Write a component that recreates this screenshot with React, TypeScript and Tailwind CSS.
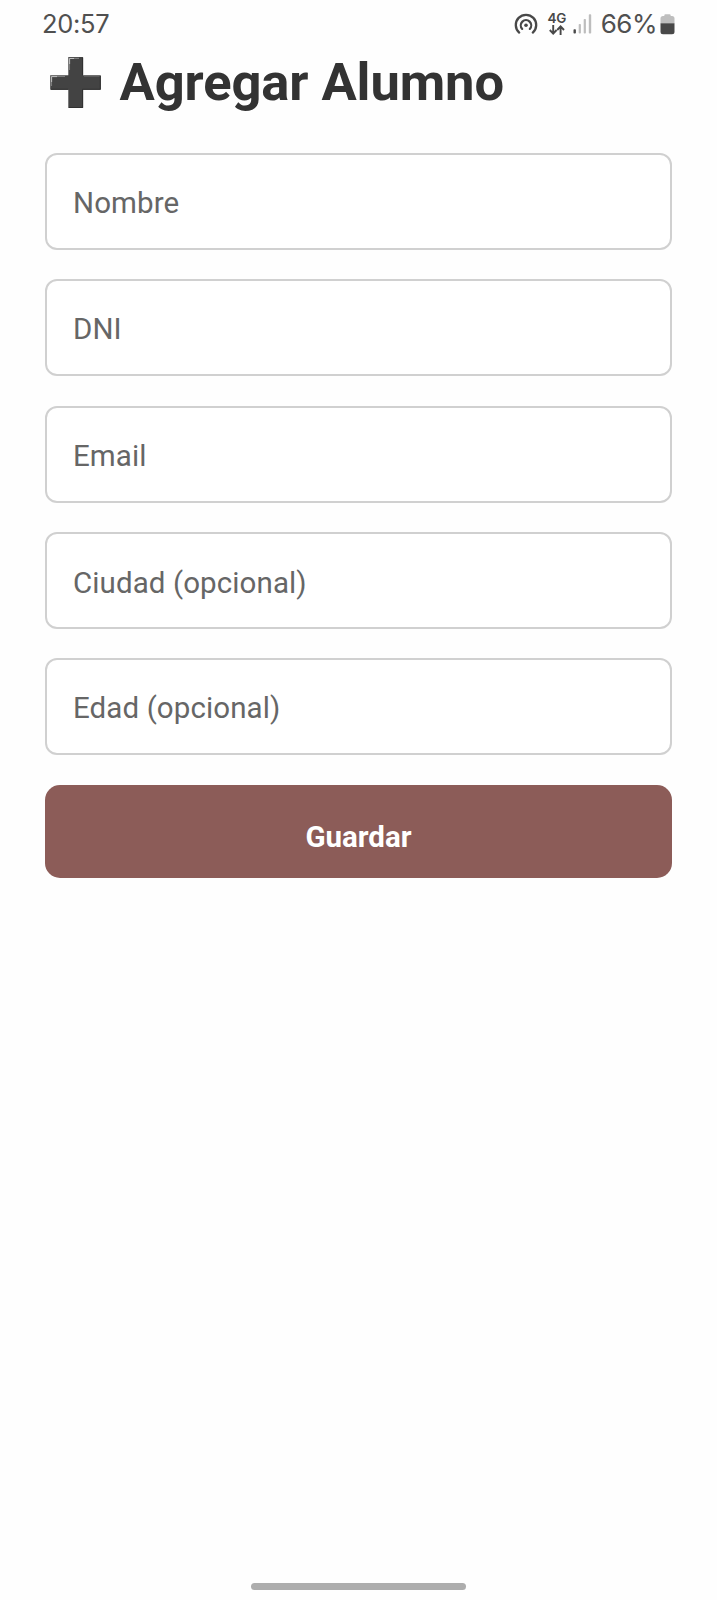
import React from "react";

const fields: { label: string; type: string; spacing: string }[] = [
  { label: "Nombre", type: "text", spacing: "pt-[3px] mb-[29px]" },
  { label: "DNI", type: "text", spacing: "pt-[3px] mb-[30px]" },
  { label: "Email", type: "email", spacing: "pt-[3px] mb-[29px]" },
  { label: "Ciudad (opcional)", type: "text", spacing: "pt-[5px] mb-[29px]" },
  { label: "Edad (opcional)", type: "text", spacing: "pt-[3px] mb-[30px]" },
];

function HotspotIcon() {
  return (
    <svg width="24" height="22" viewBox="0 0 24 22" fill="none" stroke="#484848" strokeLinecap="round">
      <path d="M5.2 19.6A10.2 10.2 0 1 1 18.8 19.6" strokeWidth="2.3" />
      <path d="M8.2 15.9A5.2 5.2 0 1 1 15.8 15.9" strokeWidth="2.2" />
      <circle cx="12" cy="12.2" r="1.8" fill="#484848" stroke="none" />
    </svg>
  );
}

function NetworkIcon() {
  return (
    <div className="flex w-[18px] flex-col items-center">
      <span className="text-[13.5px] leading-[11px] font-semibold tracking-[-0.4px] text-[#484848]">4G</span>
      <svg className="mt-px" width="16" height="10" viewBox="0 0 16 10" fill="none" stroke="#484848" strokeWidth="1.9">
        <path d="M4.2 0V8.5M0.8 5L4.2 8.6L7.6 5" />
        <path d="M11.6 10V1.5M8.2 5L11.6 1.4L15 5" />
      </svg>
    </div>
  );
}

function SignalIcon() {
  return (
    <svg width="19" height="20" viewBox="0 0 19 20">
      <rect x="0.5" y="15.3" width="2.4" height="4.2" rx="0.8" fill="#484848" />
      <rect x="5.7" y="10" width="2.2" height="9.5" rx="0.8" fill="#bdbdbd" />
      <rect x="10.7" y="5" width="2.2" height="14.5" rx="0.8" fill="#bdbdbd" />
      <rect x="15.8" y="0.3" width="2.4" height="19.2" rx="0.8" fill="#bdbdbd" />
    </svg>
  );
}

function BatteryIcon() {
  return (
    <svg width="15" height="21" viewBox="0 0 15 21">
      <path d="M4.3 2V1.5Q4.3 0.3 5.5 0.3H9.5Q10.7 0.3 10.7 1.5V2H12Q14.5 2 14.5 4.5V9.2H0.5V4.5Q0.5 2 3 2Z" fill="#bebebe" />
      <path d="M0.5 9.2H14.5V17.8Q14.5 20.3 12 20.3H3Q0.5 20.3 0.5 17.8Z" fill="#484848" />
    </svg>
  );
}

function PlusIcon() {
  return (
    <svg width="52" height="52" viewBox="0 0 52 52">
      <path d="M18.3 0H33.1V18.2H50.8V32.8H33.1V51H18.3V32.8H0.2V18.2H18.3Z" fill="#434343" />
      <path d="M32.6 1V18.2M50.3 19V32.3H32.6V50.5H19M1 32.3H18.3" fill="none" stroke="#303030" />
      <path d="M19.4 13V1.3H29" fill="none" stroke="#7c7c7c" strokeWidth="1.3" />
      <path d="M19.6 7V1.5H24" fill="none" stroke="#bdbdbd" strokeWidth="1" />
      <path d="M1.4 29V19.4H15" fill="none" stroke="#7c7c7c" strokeWidth="1.3" />
      <path d="M1.6 25V19.6H7" fill="none" stroke="#bdbdbd" strokeWidth="1" />
      <path d="M34 19.2H49.5" fill="none" stroke="#686868" strokeWidth="1" />
    </svg>
  );
}

export default function App() {
  return (
    <main className="flex h-[1600px] w-[717px] flex-col bg-[#fefefe] font-[Roboto,sans-serif]">
      <header className="flex h-12 shrink-0 items-center pr-[42px] pl-[42px] font-[Inter,sans-serif] text-[#505050]">
        <span className="text-[25.5px] leading-8 tracking-[-0.3px]">20:57</span>
        <div className="ml-auto flex items-center">
          <HotspotIcon />
          <div className="ml-[10px]"><NetworkIcon /></div>
          <div className="ml-[7px]"><SignalIcon /></div>
          <span className="ml-[9px] text-[26px] leading-8 tracking-[-0.5px]">66%</span>
          <div className="ml-[3px]"><BatteryIcon /></div>
        </div>
      </header>

      <div className="flex h-[105px] shrink-0 items-start pt-[9px] pl-[50px]">
        <PlusIcon />
        <h1 className="ml-[17.5px] text-[52.5px] leading-[51px] font-bold tracking-[-0.1px] text-[#333333]">Agregar Alumno</h1>
      </div>

      <form className="flex flex-col pr-[45px] pl-[45px]" onSubmit={(e) => e.preventDefault()}>
        {fields.map((f) => (
          <input
            key={f.label}
            type={f.type}
            placeholder={f.label}
            aria-label={f.label}
            className={`h-[97px] w-full rounded-[12px] border-2 border-[#d0d0d0] bg-white px-[26px] text-[29.5px] tracking-[0.1px] text-[#333333] outline-none placeholder:text-[#666666] ${f.spacing}`}
          />
        ))}
        <button className="h-[93px] w-full rounded-[15px] bg-[#8c5c58] pt-[12px] text-[29.5px] font-bold text-white">
          Guardar
        </button>
      </form>

      <div className="mt-auto mb-[10px] h-[7px] w-[215px] self-center rounded-full bg-[#adadad]" />
    </main>
  );
}
